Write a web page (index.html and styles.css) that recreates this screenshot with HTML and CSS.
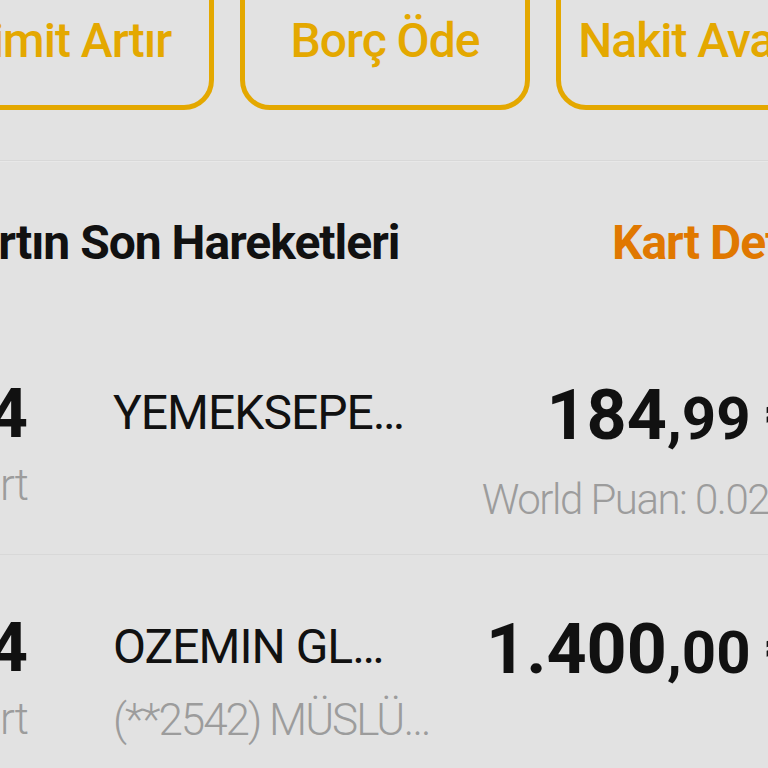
FILE: index.html
```html
<!DOCTYPE html>
<html lang="tr">
<head>
<meta charset="utf-8">
<title>Kart Hareketleri</title>
<link rel="stylesheet" href="styles.css">
</head>
<body>
<div class="screen">
  <div class="actions">
    <button class="action">Limit Artır</button>
    <button class="action">Borç Öde</button>
    <button class="action">Nakit Avans</button>
  </div>
  <div class="divider"></div>
  <div class="head">
    <h2 class="head-title">Kartın Son Hareketleri</h2>
    <a class="head-link">Kart Detayı</a>
  </div>
  <div class="tx tx-first">
    <div class="tx-date">
      <span class="tx-day">24</span>
      <span class="tx-card">Ana Kart</span>
    </div>
    <div class="tx-merchant">
      <span class="tx-name">YEMEKSEPE…</span>
    </div>
    <div class="tx-amount">
      <span class="tx-sum"><span class="tx-int">184</span><span class="tx-dec">,99 ₺</span></span>
      <span class="tx-point">World Puan: 0.02</span>
    </div>
  </div>
  <div class="tx">
    <div class="tx-date">
      <span class="tx-day">24</span>
      <span class="tx-card">Ana Kart</span>
    </div>
    <div class="tx-merchant">
      <span class="tx-name">OZEMIN GL…</span>
      <span class="tx-sub">(**2542) MÜSLÜ…</span>
    </div>
    <div class="tx-amount">
      <span class="tx-sum"><span class="tx-int">1.400</span><span class="tx-dec">,00 ₺</span></span>
    </div>
  </div>
</div>
</body>
</html>
```
FILE: styles.css
```css
html, body {
  margin: 0;
  padding: 0;
  background: #e2e2e2;
}
body {
  font-family: Roboto, "Noto Sans", sans-serif;
  color: #111;
  overflow: hidden;
}
.screen {
  width: 768px;
  height: 768px;
  overflow: hidden;
}
.actions {
  display: flex;
  gap: 26px;
  margin-left: -76px;
  margin-top: -40px;
}
.action {
  flex: 0 0 290px;
  height: 150px;
  box-sizing: border-box;
  border: 5px solid #e4a800;
  border-radius: 30px;
  background: transparent;
  color: #e4a800;
  font-family: Roboto, sans-serif;
  font-weight: 500;
  font-size: 48px;
  line-height: 48px;
  letter-spacing: -1px;
  padding: 52px 0 0;
  display: flex;
  justify-content: center;
  align-items: flex-start;
  white-space: nowrap;
}
.divider {
  height: 1px;
  background: #d8d8d8;
  box-shadow: 0 1px 0 #e8e8e8;
  margin-top: 50px;
}
.head {
  display: flex;
  align-items: flex-start;
  height: 160px;
  box-sizing: border-box;
  padding-top: 58px;
  margin-right: -72px;
}
.head-title {
  margin: 0 0 0 -56px;
  font-size: 48px;
  line-height: 48px;
  font-weight: 700;
  color: #111;
  letter-spacing: -1px;
  white-space: nowrap;
}
.head-link {
  margin-left: auto;
  font-size: 48px;
  line-height: 48px;
  font-weight: 700;
  color: #e07800;
  letter-spacing: -1px;
  white-space: nowrap;
}
.tx {
  display: grid;
  grid-template-columns: 150px 1fr auto;
  margin-left: -122px;
  margin-right: -33px;
  height: 234px;
  box-sizing: border-box;
  padding-top: 59px;
  border-bottom: 1px solid #d8d8d8;
}
.tx-date {
  display: flex;
  flex-direction: column;
  align-items: flex-end;
}
.tx-day {
  font-size: 68px;
  line-height: 68px;
  font-weight: 700;
  white-space: nowrap;
}
.tx-card {
  margin-top: 15px;
  font-size: 44px;
  line-height: 44px;
  font-weight: 300;
  color: #9c9c9c;
  letter-spacing: -1px;
  white-space: nowrap;
}
.tx-merchant {
  display: flex;
  flex-direction: column;
  padding-left: 85px;
  padding-top: 9px;
}
.tx-name {
  font-size: 48px;
  line-height: 48px;
  font-weight: 400;
  letter-spacing: -1px;
  white-space: nowrap;
}
.tx-sub {
  margin-top: 27px;
  font-size: 44px;
  line-height: 44px;
  font-weight: 300;
  color: #9c9c9c;
  letter-spacing: -2px;
  white-space: nowrap;
}
.tx-amount {
  display: flex;
  flex-direction: column;
  align-items: flex-end;
}
.tx-sum {
  display: block;
  font-weight: 700;
  white-space: nowrap;
  font-size: 70px;
  line-height: 70px;
}
.tx-int {
  font-size: 70px;
}
.tx-dec {
  font-size: 60px;
}
.tx-point {
  margin-top: 25px;
  padding-right: 32px;
  font-size: 42px;
  line-height: 42px;
  font-weight: 300;
  color: #9c9c9c;
  letter-spacing: -1.5px;
  white-space: nowrap;
}
```
